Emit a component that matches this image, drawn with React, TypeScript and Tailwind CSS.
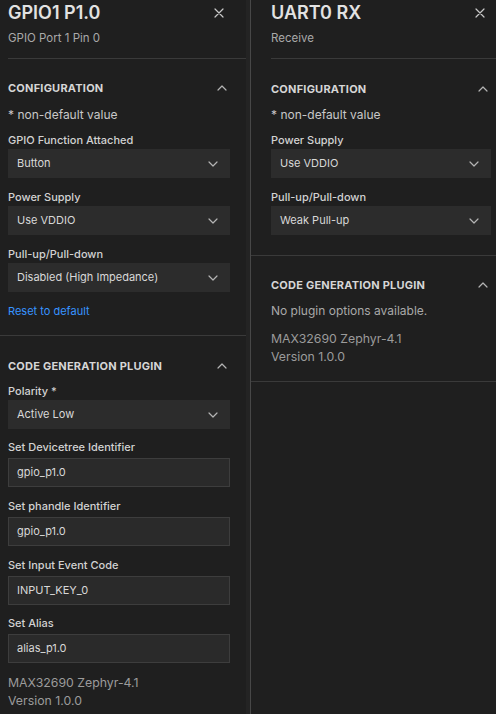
import React from 'react';

function Chevron({ up = false }: { up?: boolean }) {
  return (
    <svg width="10" height="6" viewBox="0 0 10 6" fill="none" className="shrink-0">
      <polyline
        points={up ? '1,5 5,1 9,5' : '1,1 5,5 9,1'}
        stroke="#b4b4b4"
        strokeWidth="1.2"
        strokeLinecap="round"
        strokeLinejoin="round"
      />
    </svg>
  );
}

function CloseIcon() {
  return (
    <svg width="10" height="10" viewBox="0 0 10 10" fill="none">
      <path d="M1 1 L9 9 M9 1 L1 9" stroke="#c8c8c8" strokeWidth="1.2" strokeLinecap="round" />
    </svg>
  );
}

function Header({ title, subtitle, right }: { title: string; subtitle: string; right: string }) {
  return (
    <div className={`h-[59px] border-b border-[#3a3a3a] flex flex-col ${right}`}>
      <div className="flex items-center justify-between h-[26px]">
        <span className="text-[18px] leading-[26px] font-semibold text-[#e2e2e2]">{title}</span>
        <CloseIcon />
      </div>
      <div className="mt-[5px] text-[11.5px] leading-[14px] text-[#a9a9a9]">{subtitle}</div>
    </div>
  );
}

function SectionTitle({ children }: { children: React.ReactNode }) {
  return (
    <div className="flex items-center justify-between h-[16px] pr-[3px]">
      <span className="text-[11px] font-bold tracking-[0.02em] text-[#d6d6d6] uppercase">{children}</span>
      <Chevron up />
    </div>
  );
}

function Label({ children }: { children: React.ReactNode }) {
  return <div className="h-[16px] leading-[16px] text-[11px] font-medium text-[#d2d2d2]">{children}</div>;
}

function Select({ label, value, className = '' }: { label: string; value: string; className?: string }) {
  return (
    <div className={className}>
      <Label>{label}</Label>
      <div className="mt-px h-[29px] bg-[#2c2c2c] flex items-center justify-between pl-[9px] pr-[12px]">
        <span className="text-[11px] text-[#d8d8d8]">{value}</span>
        <Chevron />
      </div>
    </div>
  );
}

function TextInput({ label, value, className = '' }: { label: string; value: string; className?: string }) {
  return (
    <div className={className}>
      <Label>{label}</Label>
      <div className="mt-[3px] h-[29px] bg-[#2a2a2a] border border-[#3d3d3d] flex items-center pl-[8px]">
        <span className="text-[11px] text-[#d8d8d8]">{value}</span>
      </div>
    </div>
  );
}

function Footer() {
  return (
    <div className="text-[12.3px] leading-[18px] text-[#9b9b9b]">
      <div>MAX32690 Zephyr-4.1</div>
      <div>Version 1.0.0</div>
    </div>
  );
}

export default function App() {
  return (
    <div
      className="w-[496px] h-[714px] overflow-hidden bg-[#1f1f1f] flex"
      style={{ fontFamily: 'Inter, "Noto Sans", sans-serif' }}
    >
      {/* GPIO panel */}
      <div className="w-[246px] shrink-0 flex flex-col">
        <div className="pl-[8px]">
          <Header title="GPIO1 P1.0" subtitle="GPIO Port 1 Pin 0" right="pr-[22px]" />
        </div>
        <div className="pl-[8px] pr-[16px] pt-[21px] pb-[16px] border-b border-[#3a3a3a]">
          <SectionTitle>Configuration</SectionTitle>
          <div className="mt-[11px] text-[12px] leading-[16px] text-[#c8c8c8]">* non-default value</div>
          <Select className="mt-[9px]" label="GPIO Function Attached" value="Button" />
          <Select className="mt-[11px]" label="Power Supply" value="Use VDDIO" />
          <Select className="mt-[11px]" label="Pull-up/Pull-down" value="Disabled (High Impedance)" />
          <div className="mt-[11px] text-[11px] leading-[16px] text-[#3794ff]">Reset to default</div>
        </div>
        <div className="pl-[8px] pr-[16px] pt-[22px]">
          <SectionTitle>Code Generation Plugin</SectionTitle>
          <Select className="mt-[9px]" label="Polarity *" value="Active Low" />
          <TextInput className="mt-[10px]" label="Set Devicetree Identifier" value="gpio_p1.0" />
          <TextInput className="mt-[11px]" label="Set phandle Identifier" value="gpio_p1.0" />
          <TextInput className="mt-[11px]" label="Set Input Event Code" value="INPUT_KEY_0" />
          <TextInput className="mt-[10px]" label="Set Alias" value="alias_p1.0" />
          <div className="mt-[11px]">
            <Footer />
          </div>
        </div>
      </div>

      {/* divider */}
      <div className="w-[4px] shrink-0 bg-[#242424]" />
      <div className="w-px shrink-0 bg-[#474747]" />

      {/* UART panel */}
      <div className="flex-1 flex flex-col">
        <div className="h-[382px] border-b border-[#3a3a3a]">
          <div className="pl-[20px]">
            <Header title="UART0 RX" subtitle="Receive" right="pr-[11px]" />
          </div>
          <div className="pl-[20px] pr-[5px] pt-[22px] pb-[20px] border-b border-[#3a3a3a]">
            <SectionTitle>Configuration</SectionTitle>
            <div className="mt-[10px] text-[12px] leading-[16px] text-[#c8c8c8]">* non-default value</div>
            <Select className="mt-[9px]" label="Power Supply" value="Use VDDIO" />
            <Select className="mt-[11px]" label="Pull-up/Pull-down" value="Weak Pull-up" />
          </div>
          <div className="pl-[20px] pr-[5px] pt-[21px]">
            <SectionTitle>Code Generation Plugin</SectionTitle>
            <div className="mt-[10px] text-[12px] leading-[16px] text-[#a9a9a9]">No plugin options available.</div>
            <div className="mt-[11px]">
              <Footer />
            </div>
          </div>
        </div>
      </div>
    </div>
  );
}
